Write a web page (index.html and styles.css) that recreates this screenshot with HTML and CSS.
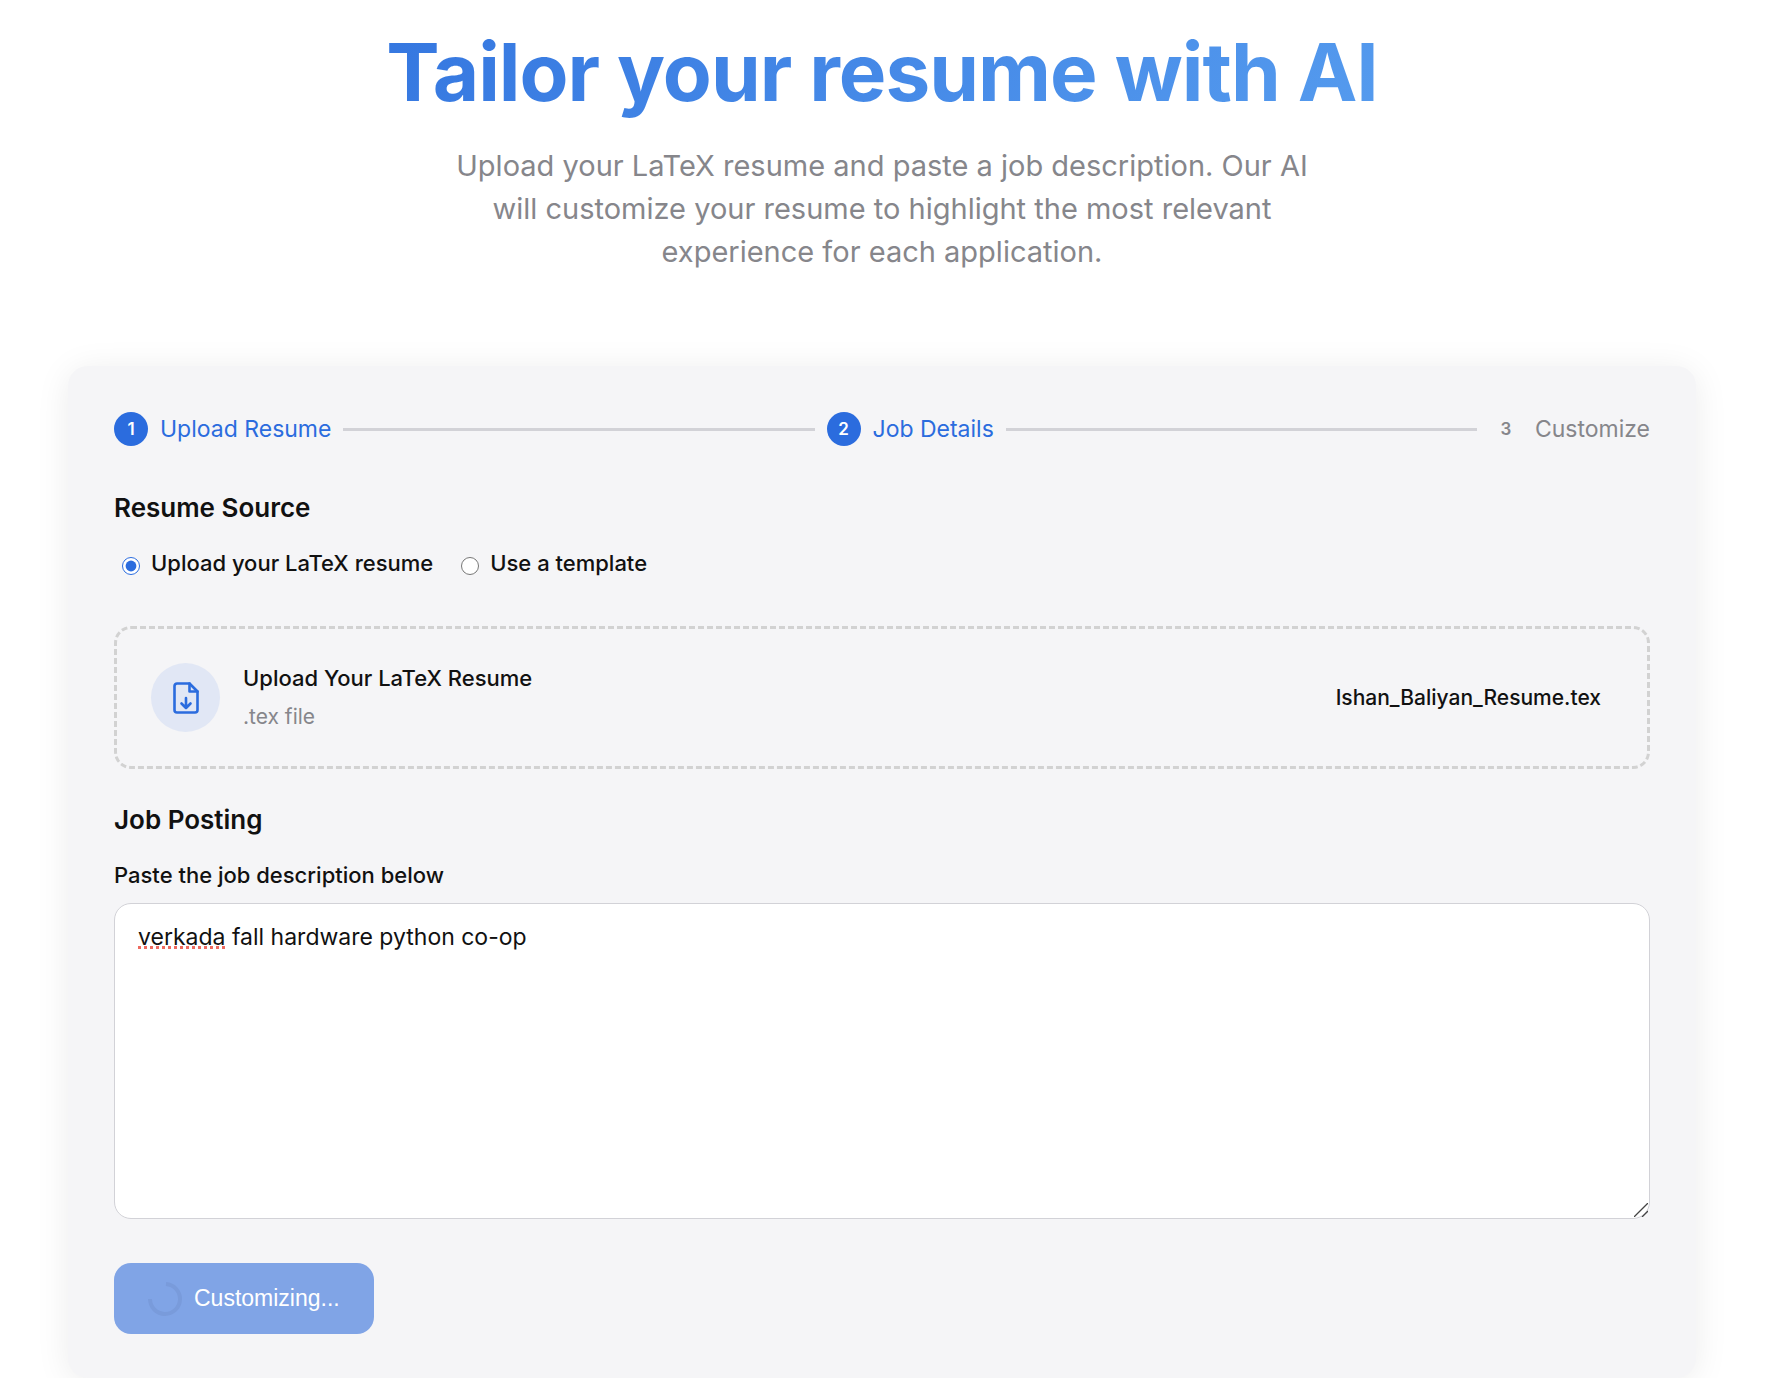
FILE: index.html
```html
<!DOCTYPE html>
<html lang="en">

<head>
    <meta charset="UTF-8">
    <meta name="viewport" content="width=device-width, initial-scale=1.0">
    <title>Tailor your resume with AI</title>
    <link rel="stylesheet" href="styles.css">
</head>

<body>
    <header class="hero">
        <h1>Tailor your resume with AI</h1>
        <p>Upload your LaTeX resume and paste a job description. Our AI will customize your resume to highlight the most relevant experience for each application.</p>
    </header>

    <main class="card">
        <ol class="steps">
            <li class="step active">
                <span class="step-number">1</span>
                <span>Upload Resume</span>
            </li>
            <li class="step-line" aria-hidden="true"></li>
            <li class="step active">
                <span class="step-number">2</span>
                <span>Job Details</span>
            </li>
            <li class="step-line" aria-hidden="true"></li>
            <li class="step">
                <span class="step-number">3</span>
                <span>Customize</span>
            </li>
        </ol>

        <form>
            <h2 id="sourceTitle">Resume Source</h2>
            <div class="radio-group" role="radiogroup" aria-labelledby="sourceTitle">
                <label><input type="radio" name="source" value="upload" checked>Upload your LaTeX resume</label>
                <label><input type="radio" name="source" value="template">Use a template</label>
            </div>

            <input type="file" id="fileInput" class="file-input" accept=".tex">
            <label for="fileInput" class="drop-zone">
                <span class="drop-icon">
                    <svg viewBox="0 0 26 32" width="26" height="32" fill="none" stroke="currentColor" stroke-width="2.6" stroke-linecap="round" stroke-linejoin="round">
                        <path d="M16.5 1.5H4A2.5 2.5 0 0 0 1.5 4v24A2.5 2.5 0 0 0 4 30.5h18a2.5 2.5 0 0 0 2.5-2.5V9.5z" />
                        <path d="M16.5 1.5v8h8" />
                        <path d="M13 16v10M8.5 21.5l4.500 4.500 4.500-4.500" />
                    </svg>
                </span>
                <span class="drop-text">
                    <span class="drop-title">Upload Your LaTeX Resume</span>
                    <span class="drop-hint">.tex file</span>
                </span>
                <span class="file-name" id="fileName">Ishan_Baliyan_Resume.tex</span>
            </label>

            <h2>Job Posting</h2>
            <label for="jobDescription" class="field-label">Paste the job description below</label>
            <div class="textarea-wrap">
                <textarea id="jobDescription" spellcheck="false">verkada fall hardware python co-op</textarea>
                <span class="spelling-mark" aria-hidden="true"></span>
                <svg class="resize-grip" viewBox="0 0 14 14" width="14" height="14" stroke="#444" stroke-width="1.3" aria-hidden="true">
                    <path d="M0 14L14 0M8 14l6-6" />
                </svg>
            </div>

            <button type="submit" class="submit" disabled>
                <svg class="spinner" viewBox="0 0 34 34" width="34" height="34" fill="none" stroke="currentColor" stroke-width="4" aria-hidden="true">
                    <path d="M18 2a15 15 0 1 1-16 15" />
                </svg>
                Customizing...
            </button>
        </form>
    </main>

    <script>
        const fileInput = document.getElementById('fileInput');
        const fileName = document.getElementById('fileName');

        fileInput.addEventListener('change', (event) => {
            const file = event.target.files[0];
            if (file) {
                fileName.textContent = file.name;
            }
        });
    </script>
</body>

</html>
```
FILE: styles.css
```css
* {
    box-sizing: border-box;
}

body {
    margin: 0;
    padding: 26px 90px 0 68px;
    background: #fff;
    color: #111;
    font-family: Inter, sans-serif;
    font-size: 23px;
    overflow-x: hidden;
}

.hero {
    text-align: center;
    margin-bottom: 93px;
}

h1 {
    width: fit-content;
    margin: 0 auto 26px;
    font-size: 80px;
    line-height: 92px;
    font-weight: 700;
    letter-spacing: -1px;
    background: linear-gradient(135deg, #3577e0, #559bee);
    -webkit-background-clip: text;
    background-clip: text;
    color: transparent;
}

.hero p {
    max-width: 880px;
    margin: 0 auto;
    color: #86868b;
    font-size: 29px;
    line-height: 43px;
}

.card {
    padding: 46px 46px 44px;
    background: #f5f5f7;
    border-radius: 20px;
    box-shadow: 0 4px 34px rgba(0, 0, 0, 0.08);
}

/* Progress steps */
.steps {
    display: flex;
    align-items: center;
    gap: 12px;
    margin: 0 0 40px;
    padding: 0;
    list-style: none;
}

.step {
    display: flex;
    align-items: center;
    gap: 12px;
    color: #86868b;
    line-height: 34px;
}

.step.active {
    color: #2b6cde;
}

.step-number {
    width: 34px;
    height: 34px;
    border-radius: 50%;
    text-align: center;
    font-size: 17px;
    font-weight: 600;
}

.active .step-number {
    background: #2b6cde;
    color: #fff;
}

.step-line {
    flex: 1;
    height: 3px;
    background: #d2d2d7;
}

h2 {
    margin: 0 0 17px;
    font-size: 26px;
    line-height: 44px;
    font-weight: 600;
}

/* Resume source */
.radio-group {
    display: flex;
    gap: 28px;
    margin-bottom: 47px;
    padding-left: 8px;
}

.radio-group label {
    display: flex;
    align-items: center;
    gap: 11px;
    font-size: 22px;
    line-height: 32px;
    font-weight: 500;
}

.radio-group input {
    width: 18px;
    height: 18px;
    margin: 5px 0 0;
    accent-color: #2b6cde;
}

.file-input {
    display: none;
}

.drop-zone {
    display: flex;
    align-items: center;
    gap: 23px;
    margin-bottom: 29px;
    padding: 34px 46px 34px 34px;
    border: 3px dashed #d2d2d2;
    border-radius: 17px;
    cursor: pointer;
}

.drop-icon {
    display: flex;
    align-items: center;
    justify-content: center;
    width: 69px;
    height: 69px;
    border-radius: 50%;
    background: #e1e7f5;
    color: #2b6cde;
}

.drop-text {
    display: flex;
    flex: 1;
    flex-direction: column;
    gap: 7px;
    line-height: 31px;
}

.drop-title {
    font-size: 22px;
    font-weight: 500;
}

.drop-hint {
    color: #86868b;
    font-size: 21px;
}

.file-name {
    font-size: 21px;
    font-weight: 500;
}

/* Job posting */
.field-label {
    display: block;
    margin-bottom: 12px;
    font-size: 22px;
    line-height: 32px;
    font-weight: 500;
}

.textarea-wrap {
    position: relative;
    margin-bottom: 44px;
}

textarea {
    display: block;
    width: 100%;
    height: 316px;
    padding: 16px 23px;
    border: 1px solid #d2d2d7;
    border-radius: 17px;
    background: #fff;
    color: #111;
    font: inherit;
    line-height: 34px;
    resize: none;
}

.spelling-mark {
    position: absolute;
    left: 24px;
    top: 43px;
    width: 87px;
    border-bottom: 3px dotted #ee6a5f;
}

.resize-grip {
    position: absolute;
    right: 2px;
    bottom: 2px;
}

.submit {
    display: flex;
    align-items: center;
    gap: 12px;
    height: 71px;
    padding: 0 34px;
    border: none;
    border-radius: 17px;
    background: #80a4e6;
    color: #fff;
    font-family: "Liberation Sans", Arial, sans-serif;
    font-size: 23px;
}

.spinner {
    color: #799bdb;
}
```
